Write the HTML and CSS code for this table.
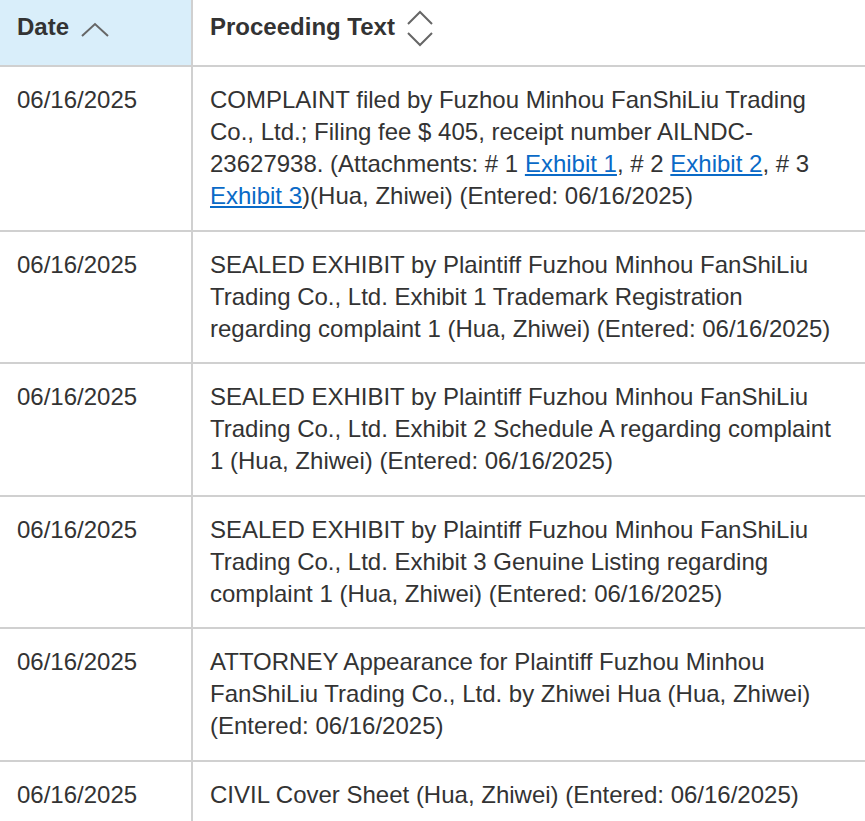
FILE: index.html
```html
<!DOCTYPE html>
<html>
<head>
<meta charset="utf-8">
<link rel="stylesheet" href="styles.css">
</head>
<body>
<table class="docket">
  <thead>
    <tr>
      <th class="col-date sorted"><span class="th-inner">Date <svg class="chev" width="28" height="16" viewBox="0 0 28 16"><polyline points="1,14 14,2 27,14" fill="none" stroke="#666" stroke-width="2"/></svg></span></th>
      <th class="col-text"><span class="th-inner">Proceeding Text <svg class="chev2" width="26" height="38" viewBox="0 0 26 38"><polyline points="1,14 13,2 25,14" fill="none" stroke="#666" stroke-width="2"/><polyline points="1,23 13,35 25,23" fill="none" stroke="#666" stroke-width="2"/></svg></span></th>
    </tr>
  </thead>
  <tbody>
    <tr>
      <td class="col-date">06/16/2025</td>
      <td class="col-text">COMPLAINT filed by Fuzhou Minhou FanShiLiu Trading Co., Ltd.; Filing fee $ 405, receipt number AILNDC-23627938. (Attachments: # 1 <a href="#">Exhibit 1</a>, # 2 <a href="#">Exhibit 2</a>, # 3 <a href="#">Exhibit 3</a>)(Hua, Zhiwei) (Entered: 06/16/2025)</td>
    </tr>
    <tr>
      <td class="col-date">06/16/2025</td>
      <td class="col-text">SEALED EXHIBIT by Plaintiff Fuzhou Minhou FanShiLiu Trading Co., Ltd. Exhibit 1 Trademark Registration regarding complaint 1 (Hua, Zhiwei) (Entered: 06/16/2025)</td>
    </tr>
    <tr>
      <td class="col-date">06/16/2025</td>
      <td class="col-text">SEALED EXHIBIT by Plaintiff Fuzhou Minhou FanShiLiu Trading Co., Ltd. Exhibit 2 Schedule A regarding complaint 1 (Hua, Zhiwei) (Entered: 06/16/2025)</td>
    </tr>
    <tr>
      <td class="col-date">06/16/2025</td>
      <td class="col-text">SEALED EXHIBIT by Plaintiff Fuzhou Minhou FanShiLiu Trading Co., Ltd. Exhibit 3 Genuine Listing regarding complaint 1 (Hua, Zhiwei) (Entered: 06/16/2025)</td>
    </tr>
    <tr>
      <td class="col-date">06/16/2025</td>
      <td class="col-text">ATTORNEY Appearance for Plaintiff Fuzhou Minhou FanShiLiu Trading Co., Ltd. by Zhiwei Hua (Hua, Zhiwei) (Entered: 06/16/2025)</td>
    </tr>
    <tr>
      <td class="col-date">06/16/2025</td>
      <td class="col-text">CIVIL Cover Sheet (Hua, Zhiwei) (Entered: 06/16/2025)</td>
    </tr>
  </tbody>
</table>
</body>
</html>
```
FILE: styles.css
```css
html, body {
  margin: 0;
  padding: 0;
  background: #fff;
}
body {
  font-family: "Liberation Sans", Arial, sans-serif;
  font-size: 24px;
  line-height: 32px;
  color: #333;
  overflow: hidden;
}
.docket {
  width: 865px;
  border-collapse: collapse;
  table-layout: fixed;
}
.docket th,
.docket td {
  text-align: left;
  vertical-align: top;
  border-bottom: 2px solid #d0d0d0;
  padding: 17px 17px 17.5px 17px;
}
.docket th {
  font-weight: bold;
  color: #333;
  padding-top: 11px;
  padding-bottom: 22px;
}
.docket .col-date {
  width: 157px;
  border-right: 2px solid #d0d0d0;
}
.docket th.sorted {
  background: #d9eefa;
}
.th-inner {
  display: inline-flex;
  align-items: center;
  gap: 10px;
  height: 32px;
}
.chev {
  margin-top: 6px;
  margin-left: 2px;
}
.chev2 {
  margin-top: 4px;
  margin-left: 2px;
}
.docket a {
  color: #0a6ac7;
  text-decoration: underline;
}
```
